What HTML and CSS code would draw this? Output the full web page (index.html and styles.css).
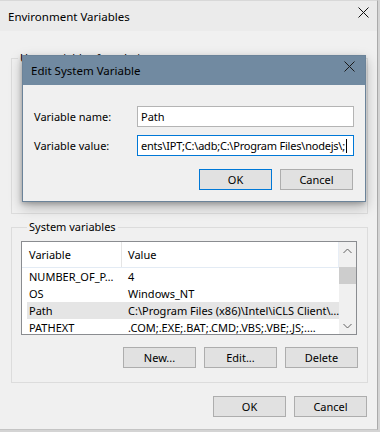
FILE: index.html
```html
<!DOCTYPE html>
<html>
<head>
<meta charset="utf-8">
<link rel="stylesheet" href="styles.css">
</head>
<body>
<div class="window">
  <div class="titlebar">
    <span class="title">Environment Variables</span>
    <svg class="close" width="11" height="11" viewBox="0 0 11 11"><path d="M0.5 0.5L10.5 10.5M10.5 0.5L0.5 10.5" stroke="#111" stroke-width="1" fill="none"/></svg>
  </div>
  <div class="content">
    <fieldset class="group user"><legend>User variables for admin</legend></fieldset>
    <fieldset class="group system">
      <legend>System variables</legend>
      <div class="list">
        <div class="list-main">
          <div class="list-head">
            <div class="hcol hcol1">Variable</div>
            <div class="hcol hcol2">Value</div>
          </div>
          <div class="row"><span class="c1">NUMBER_OF_P…</span><span class="c2">4</span></div>
          <div class="row"><span class="c1">OS</span><span class="c2">Windows_NT</span></div>
          <div class="row sel"><span class="c1">Path</span><span class="c2">C:\Program Files (x86)\Intel\iCLS Client\…</span></div>
          <div class="row"><span class="c1">PATHEXT</span><span class="c2">.COM;.EXE;.BAT;.CMD;.VBS;.VBE;.JS;.…</span></div>
        </div>
        <div class="scrollbar">
          <div class="sb-btn"><svg width="9" height="6" viewBox="0 0 9 6"><path d="M0.5 5L4.5 1L8.5 5" stroke="#606060" fill="none"/></svg></div>
          <div class="sb-gap"></div>
          <div class="sb-thumb"></div>
          <div class="sb-track"></div>
          <div class="sb-btn"><svg width="9" height="6" viewBox="0 0 9 6"><path d="M0.5 1L4.5 5L8.5 1" stroke="#606060" fill="none"/></svg></div>
        </div>
      </div>
      <div class="btn-row">
        <button class="btn">New...</button>
        <button class="btn">Edit...</button>
        <button class="btn">Delete</button>
      </div>
    </fieldset>
    <div class="btn-row footer">
      <button class="btn">OK</button>
      <button class="btn">Cancel</button>
    </div>
  </div>
</div>

<div class="dialog">
  <div class="dlg-title">
    <span class="title">Edit System Variable</span>
    <svg class="dlg-close" width="11" height="11" viewBox="0 0 11 11"><path d="M0.5 0.5L10.5 10.5M10.5 0.5L0.5 10.5" stroke="#1a1a1a" stroke-width="1" fill="none"/></svg>
  </div>
  <div class="dlg-body">
    <div class="field">
      <label class="lbl">Variable name:</label>
      <div class="input">Path</div>
    </div>
    <div class="field">
      <label class="lbl">Variable value:</label>
      <div class="input focus"><span class="val">ents\IPT;C:\adb;C:\Program Files\nodejs\;</span><span class="caret"></span></div>
    </div>
    <div class="btn-row dlg-btns">
      <button class="btn default">OK</button>
      <button class="btn">Cancel</button>
    </div>
  </div>
</div>
</body>
</html>
```

FILE: styles.css
```css
html, body {
  margin: 0;
  padding: 0;
}
body {
  width: 380px;
  height: 432px;
  overflow: hidden;
  background: #d4d4d4;
  font-family: "Noto Sans", "Segoe UI", sans-serif;
  font-size: 11px;
  color: #000;
  position: relative;
}
.window {
  width: 378px;
  height: 430px;
  box-sizing: border-box;
  background: #f0f0f0;
  border-right: 1px solid #aaaaaa;
  border-bottom: 1px solid #c4c4c4;
  border-top: 1px solid #d8d8d8;
  display: flex;
  flex-direction: column;
}
.titlebar {
  height: 30px;
  background: #ebebeb;
  display: flex;
  justify-content: space-between;
  align-items: flex-start;
  padding-left: 8px;
  padding-right: 8px;
}
.titlebar .title {
  line-height: 16px;
  margin-top: 8px;
  font-size: 11.5px;
}
.close {
  margin-top: 6px;
}
.content {
  padding: 19px 9px 0 11px;
  display: flex;
  flex-direction: column;
}
.group {
  margin: 0;
  padding: 0;
  border: 1px solid #dcdcdc;
  box-sizing: border-box;
  min-width: 0;
}
.group legend {
  padding: 0 2px;
  margin-left: 6px;
  line-height: 16px;
}
.user {
  height: 164px;
}
.system {
  margin-top: 5px;
  padding: 6px 10px 14px 9px;
}
.list {
  height: 94px;
  box-sizing: border-box;
  border: 1px solid #8a8c90;
  background: #fff;
  display: flex;
}
.list-main {
  flex: 1;
  overflow: hidden;
}
.list-head {
  height: 25px;
  border-bottom: 1px solid #e3ebf4;
  border-right: 1px solid #e8eef6;
  display: flex;
  align-items: stretch;
}
.hcol {
  display: flex;
  align-items: center;
  line-height: 16px;
}
.hcol1 {
  width: 92px;
  padding-left: 7px;
  border-right: 1px solid #e5e5e5;
}
.hcol2 {
  padding-left: 6px;
}
.row {
  height: 17px;
  margin-left: 5px;
  display: flex;
  align-items: center;
  white-space: nowrap;
  overflow: hidden;
  line-height: 16px;
}
.row.sel {
  background: #e5e5e5;
}
.c1 {
  width: 99px;
  padding-left: 2px;
  flex: none;
  overflow: hidden;
}
.c2 {
  flex: none;
}
.scrollbar {
  width: 17px;
  background: #f0f0f0;
  display: flex;
  flex-direction: column;
}
.sb-btn {
  height: 17px;
  display: flex;
  align-items: center;
  justify-content: center;
}
.sb-gap {
  height: 8px;
}
.sb-thumb {
  height: 17px;
  background: #cdcdcd;
}
.sb-track {
  flex: 1;
}
.btn-row {
  display: flex;
  justify-content: flex-end;
  gap: 8px;
}
.system .btn-row {
  margin-top: 12px;
  margin-right: -1px;
}
.footer {
  margin-top: 13px;
  margin-right: 1px;
}
.btn {
  width: 73px;
  height: 21px;
  box-sizing: border-box;
  margin: 0;
  padding: 0;
  background: #e1e1e1;
  border: 1px solid #adadad;
  font-family: inherit;
  font-size: 11px;
  color: #000;
  line-height: 16px;
}
.btn.default {
  border-color: #0078d7;
}

/* dialog overlay */
.dialog {
  position: absolute;
  left: 22px;
  top: 55px;
  width: 344px;
  height: 147px;
  box-sizing: border-box;
  border: 1px solid #6b8399;
  background: #f0f0f0;
  box-shadow: 0 5px 12px rgba(0, 0, 0, 0.28), -1px 2px 4px rgba(0, 0, 0, 0.18);
  display: flex;
  flex-direction: column;
}
.dlg-title {
  height: 29px;
  background: #718aa1;
  display: flex;
  justify-content: space-between;
  align-items: flex-start;
  padding-left: 8px;
  padding-right: 10px;
}
.dlg-title .title {
  margin-top: 7px;
  line-height: 16px;
  font-size: 11.5px;
  color: #000;
}
.dlg-close {
  margin-top: 5px;
}
.dlg-body {
  padding: 21px 11px 11px 11px;
  display: flex;
  flex-direction: column;
  gap: 8px;
}
.field {
  display: flex;
  align-items: center;
}
.lbl {
  width: 103px;
  line-height: 16px;
}
.input {
  width: 217px;
  height: 21px;
  box-sizing: border-box;
  border: 1px solid #b4b4b4;
  background: #fff;
  padding-left: 3px;
  line-height: 19px;
  white-space: nowrap;
  overflow: hidden;
  display: flex;
  align-items: center;
}
.input.focus {
  border-color: #0078d7;
}
.val {
  letter-spacing: -0.22px;
}
.caret {
  flex: none;
  width: 1px;
  height: 14px;
  background: #000;
  margin-left: 1px;
}
.dlg-btns {
  margin-top: 5px;
  margin-right: 1px;
}
```
